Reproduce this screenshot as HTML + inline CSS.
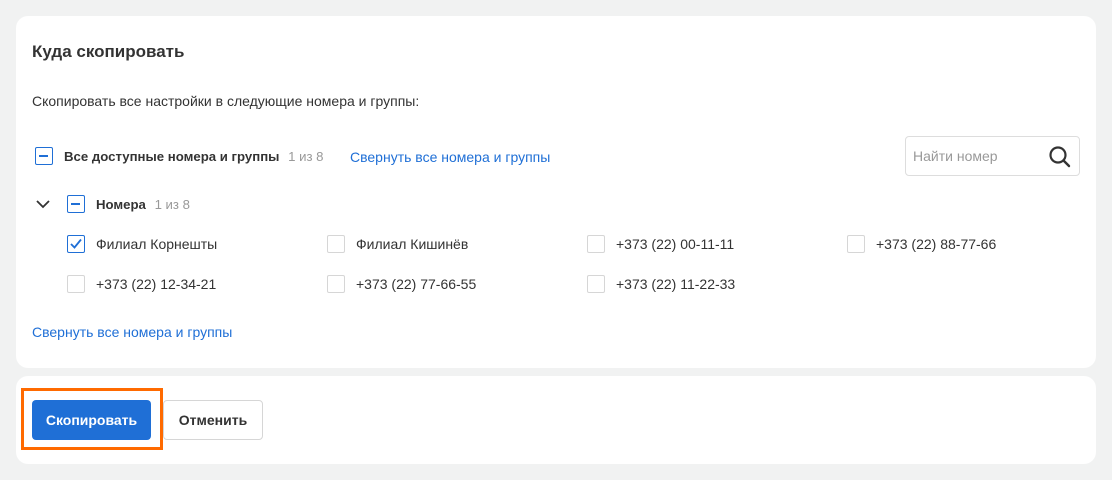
<!DOCTYPE html><html><head><style>
*{box-sizing:border-box;margin:0;padding:0}
body{width:1112px;height:480px;background:#f1f2f2;font-family:"Liberation Sans",sans-serif;color:#333;position:relative;overflow:hidden}
.card{position:absolute;left:16px;width:1080px;background:#fff;border-radius:12px}
.a{position:absolute;white-space:nowrap;font-size:14px;line-height:16px}
.cb{position:absolute;width:18px;height:18px;border:1px solid #d6d6d6;border-radius:2px;background:#fff}
.cb.on{border:1.5px solid #1f6fd6}
.cb.m::after{content:"";position:absolute;left:3px;top:7px;width:9px;height:1.6px;background:#1f6fd6}
.g{color:#999}
.l{color:#1f6fd6}
</style></head><body>
<div class="card" style="top:16px;height:352px"></div>
<div class="card" style="top:376px;height:88px"></div>
<div class="a" style="left:32px;top:42px;font-size:17px;line-height:20px;font-weight:bold;color:#333">Куда скопировать</div>
<div class="a" style="left:32px;top:93px">Скопировать все настройки в следующие номера и группы:</div>
<div class="cb on m" style="left:35px;top:147px"></div>
<div class="a" style="left:64px;top:149px;font-weight:bold;font-size:13.2px">Все доступные номера и группы <span class="g" style="font-weight:normal;margin-left:5px">1 из 8</span></div>
<div class="a l" style="left:350px;top:149px">Свернуть все номера и группы</div>
<div style="position:absolute;left:905px;top:136px;width:175px;height:40px;border:1px solid #ddd;border-radius:4px"></div>
<div class="a g" style="left:913px;top:148px">Найти номер</div>
<svg style="position:absolute;left:1047px;top:144px" width="26" height="26" viewBox="0 0 26 26"><circle cx="11" cy="11" r="7.5" fill="none" stroke="#333" stroke-width="2.2"/><path d="M16.5 16.5L22 22" stroke="#333" stroke-width="2.4" stroke-linecap="round"/></svg>
<svg style="position:absolute;left:35px;top:197px" width="16" height="14" viewBox="0 0 16 14"><path d="M2 4l6 6 6-6" fill="none" stroke="#333" stroke-width="1.8"/></svg>
<div class="cb on m" style="left:67px;top:195px"></div>
<div class="a" style="left:96px;top:197px;font-weight:bold;font-size:13.2px">Номера <span class="g" style="font-weight:normal;margin-left:5px">1 из 8</span></div>
<div class="cb on" style="left:67px;top:235px"><svg width="16" height="16" style="position:absolute;left:0;top:0"><path d="M3 8l3.5 3.5L13 3.5" fill="none" stroke="#1f6fd6" stroke-width="1.8"/></svg></div>
<div class="a" style="left:96px;top:236px">Филиал Корнешты</div>
<div class="cb" style="left:327px;top:235px"></div><div class="a" style="left:356px;top:236px">Филиал Кишинёв</div>
<div class="cb" style="left:587px;top:235px"></div><div class="a" style="left:616px;top:236px">+373 (22) 00-11-11</div>
<div class="cb" style="left:847px;top:235px"></div><div class="a" style="left:876px;top:236px">+373 (22) 88-77-66</div>
<div class="cb" style="left:67px;top:275px"></div><div class="a" style="left:96px;top:276px">+373 (22) 12-34-21</div>
<div class="cb" style="left:327px;top:275px"></div><div class="a" style="left:356px;top:276px">+373 (22) 77-66-55</div>
<div class="cb" style="left:587px;top:275px"></div><div class="a" style="left:616px;top:276px">+373 (22) 11-22-33</div>
<div class="a l" style="left:32px;top:324px">Свернуть все номера и группы</div>
<div style="position:absolute;left:21px;top:388px;width:142px;height:62px;border:3px solid #ff6a00"></div>
<div style="position:absolute;left:32px;top:400px;width:119px;height:40px;background:#1f6fd6;border-radius:4px;color:#fff;font-size:14px;font-weight:bold;line-height:40px;text-align:center">Скопировать</div>
<div style="position:absolute;left:163px;top:400px;width:100px;height:40px;border:1px solid #d6d6d6;border-radius:4px;font-size:14px;font-weight:bold;line-height:38px;text-align:center;color:#333">Отменить</div>
</body></html>
